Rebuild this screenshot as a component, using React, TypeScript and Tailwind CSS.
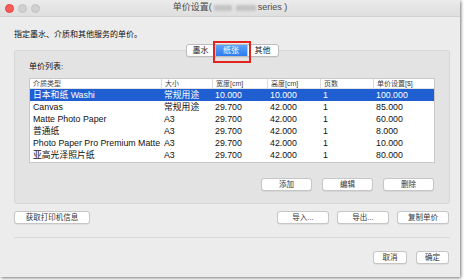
const rows = [
  { name: '日本和纸 Washi', size: '常规用途', w: '10.000', h: '10.000', pages: '1', price: '100.000', selected: true },
  { name: 'Canvas', size: '常规用途', w: '29.700', h: '42.000', pages: '1', price: '85.000' },
  { name: 'Matte Photo Paper', size: 'A3', w: '29.700', h: '42.000', pages: '1', price: '60.000' },
  { name: '普通纸', size: 'A3', w: '29.700', h: '42.000', pages: '1', price: '8.000' },
  { name: 'Photo Paper Pro Premium Matte', size: 'A3', w: '29.700', h: '42.000', pages: '1', price: '10.000' },
  { name: '亚高光泽照片纸', size: 'A3', w: '29.700', h: '42.000', pages: '1', price: '80.000' },
];

const headers = ['介质类型', '大小', '宽度[cm]', '高度[cm]', '页数', '单价设置[$]'];

function Btn({ children, className = '' }: { children: React.ReactNode; className?: string }) {
  return (
    <button
      className={`h-[13px] rounded-[3px] border border-[#c6c6c6] bg-white text-[7.5px] leading-none text-[#333] shadow-[0_0.5px_0.5px_rgba(0,0,0,0.12)] ${className}`}
    >
      {children}
    </button>
  );
}

export default function App() {
  return (
    <div className="w-[464px] h-[280px] bg-white overflow-hidden font-['Liberation_Sans','Noto_Sans_CJK_SC',sans-serif]">
      <div className="w-[460px] h-[277px] bg-[#ececec] flex flex-col shadow-[1px_1px_3px_rgba(0,0,0,0.55)]">
        {/* Title bar */}
        <div className="relative h-[17px] flex items-center border-b border-[#d2d2d2] bg-gradient-to-b from-[#ebebeb] to-[#dedede]">
          <div className="flex items-center gap-[4px] pl-[5px]">
            <span className="w-[9px] h-[9px] rounded-full bg-[#fc5b57] border border-[#e0443e]" />
            <span className="w-[9px] h-[9px] rounded-full bg-[#d0d0d0] border border-[#c2c2c2]" />
            <span className="w-[9px] h-[9px] rounded-full bg-[#d0d0d0] border border-[#c2c2c2]" />
          </div>
          <div className="flex-1 flex justify-center items-center pr-[40px] text-[9px] text-[#4a4a4a]">
            <span>单价设置(</span>
            <span className="flex gap-[4px] mx-[2px] blur-[1.2px]">
              <span className="w-[18px] h-[6px] bg-[#c4c4c4]" />
              <span className="w-[20px] h-[6px] bg-[#c4c4c4]" />
            </span>
            <span>series )</span>
          </div>
        </div>

        <div className="flex flex-col pl-[14px] pr-[10px] pt-[12px]">
          <div className="h-[12px] text-[8px] leading-[12px] text-[#111]">指定墨水、介质和其他服务的单价。</div>

          {/* Tabs */}
          <div className="relative z-10 mt-[3px] flex justify-center">
            <div className="relative flex h-[13px] rounded-[3px] border border-[#bdbdbd] bg-white text-[8px] leading-none shadow-[0_0.5px_0.5px_rgba(0,0,0,0.1)]">
              <div className="w-[29px] flex items-center justify-center text-[#222] border-r border-[#c8c8c8]">墨水</div>
              <div className="w-[31px] flex items-center justify-center text-white bg-gradient-to-b from-[#5ea2fa] to-[#2b7cf0]">纸张</div>
              <div className="w-[31px] flex items-center justify-center text-[#222] border-l border-[#c8c8c8]">其他</div>
              <div className="absolute left-[26px] top-[-4px] w-[38px] h-[22px] border-2 border-[#e3231d]" />
            </div>
          </div>

          {/* Group box */}
          <div className="-mt-[7px] h-[154px] w-[436px] rounded-[3px] border border-[#d6d6d6] bg-[#e3e3e3] px-[14px] pt-[10px] flex flex-col">
            <div className="h-[12px] text-[8px] leading-[12px] text-[#111]">单价列表:</div>
            <div className="mt-[5px] w-[406px] border border-[#c9c9c9] bg-white">
              <div className="grid grid-cols-[131px_51px_55px_53px_53px_1fr] h-[10px] border-b border-[#e2e2e2] text-[7px] leading-[10px] text-[#444]">
                {headers.map((h, i) => (
                  <div key={h} className={`pl-[3px] ${i > 0 ? 'border-l border-[#dcdcdc]' : ''}`}>{h}</div>
                ))}
              </div>
              {rows.map((r) => (
                <div
                  key={r.name}
                  className={`grid grid-cols-[131px_51px_55px_53px_53px_1fr] h-[12px] text-[8.8px] leading-[12px] ${r.selected ? 'bg-[#1f5fd1] text-white' : 'text-[#111]'}`}
                >
                  <div className="pl-[3px] whitespace-nowrap">{r.name}</div>
                  <div className="pl-[3px]">{r.size}</div>
                  <div className="pl-[3px]">{r.w}</div>
                  <div className="pl-[3px]">{r.h}</div>
                  <div className="pl-[3px]">{r.pages}</div>
                  <div className="pl-[3px]">{r.price}</div>
                </div>
              ))}
              <div className="h-[1px]" />
            </div>
            <div className="mt-[15px] flex justify-end gap-[10px] pr-[1px]">
              <Btn className="w-[51px]">添加</Btn>
              <Btn className="w-[51px]">编辑</Btn>
              <Btn className="w-[51px]">删除</Btn>
            </div>
          </div>

          {/* Printer / import row */}
          <div className="mt-[7px] flex items-center pr-[1px]">
            <Btn className="w-[76px]">获取打印机信息</Btn>
            <div className="flex-1" />
            <div className="flex gap-[8px]">
              <Btn className="w-[52px]">导入...</Btn>
              <Btn className="w-[52px]">导出...</Btn>
              <Btn className="w-[52px]">复制单价</Btn>
            </div>
          </div>

          <div className="mt-[13px] h-px w-[436px] bg-[#d8d8d8]" />

          <div className="mt-[13px] flex justify-end gap-[9px] pr-[1px]">
            <Btn className="w-[34px]">取消</Btn>
            <Btn className="w-[33px]">确定</Btn>
          </div>
        </div>
      </div>
    </div>
  );
}
